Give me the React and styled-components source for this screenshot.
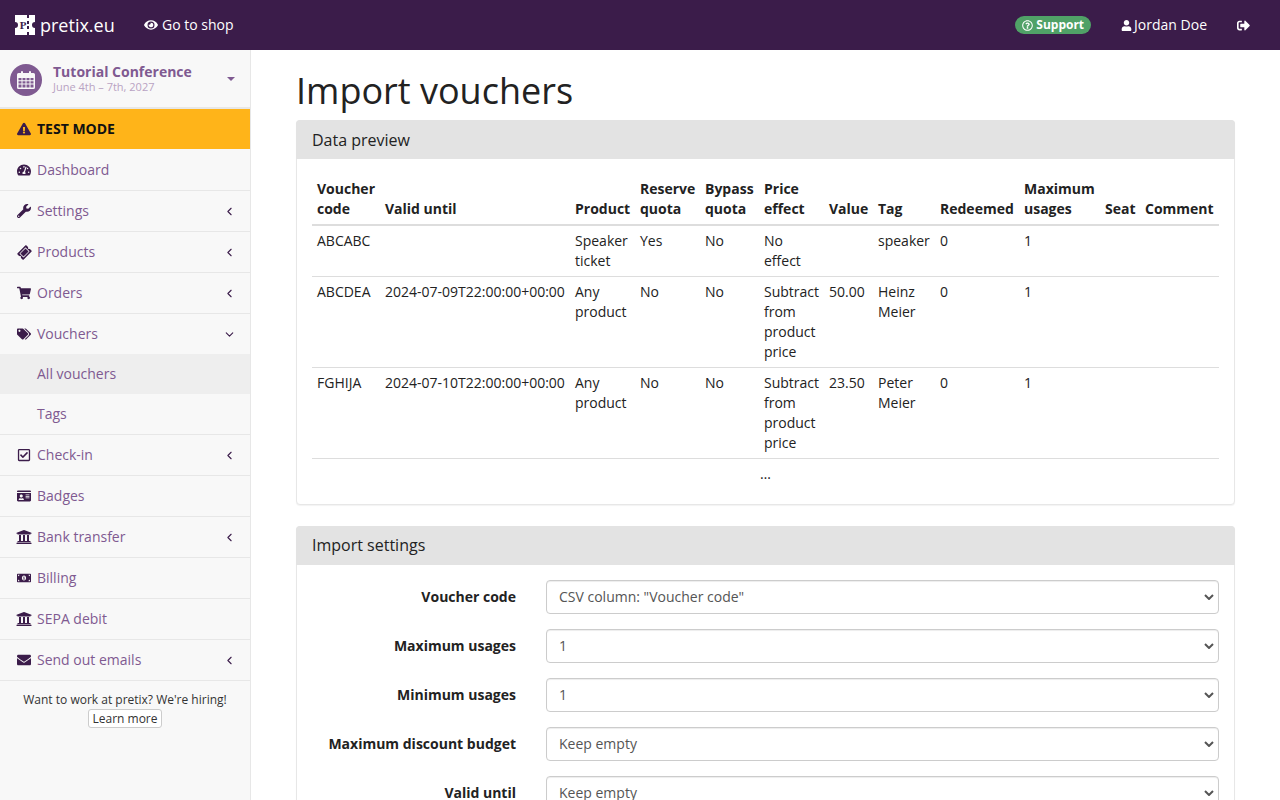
import React from "react";
import styled, { createGlobalStyle } from "styled-components";
import {
  FaEye, FaTachometerAlt, FaWrench, FaTicketAlt, FaShoppingCart, FaTags, FaRegCheckSquare,
  FaIdCard, FaUniversity, FaMoneyBillAlt, FaEnvelope, FaSignOutAlt, FaUser, FaRegQuestionCircle,
  FaExclamationTriangle,
} from "react-icons/fa";
import { ChevronLeft, ChevronDown } from "lucide-react";

const selectArrow = `url("data:image/svg+xml,%3Csvg xmlns='http://www.w3.org/2000/svg' width='10' height='6' viewBox='0 0 10 6'%3E%3Cpath d='M1 1l4 4 4-4' fill='none' stroke='%23555' stroke-width='2'/%3E%3C/svg%3E")`;

const GlobalStyle = createGlobalStyle`
  * { box-sizing: border-box; }
  html, body { margin: 0; height: 100%; overflow: hidden; }
  body {
    font-family: "Open Sans", "Liberation Sans", sans-serif;
    font-size: 14px;
    line-height: 20px;
    color: #222;
    background: #fff;
  }
`;

const Page = styled.div`
  height: 100vh;
  display: flex;
  flex-direction: column;
  overflow: hidden;
`;

// top bar
const TopBar = styled.nav`
  flex: none;
  height: 50px;
  background: #3b1c4a;
  color: #fff;
  display: flex;
  align-items: center;
  padding: 0 30px 0 15px;
`;

const Brand = styled.a`
  display: flex;
  align-items: center;
  gap: 5px;
  font-size: 18px;
  width: 129px;
`;

const TopLink = styled.a`
  display: inline-flex;
  align-items: center;
  gap: ${(p) => p.$iconGap || 4}px;
  margin-left: ${(p) => p.$gap || 0}px;
  svg { font-size: 13px; }
`;

const Spacer = styled.div`
  flex: 1;
`;

const SupportBadge = styled.span`
  display: inline-flex;
  align-items: center;
  gap: 3px;
  height: 18px;
  padding: 0 7px;
  border-radius: 9px;
  background: #50a167;
  font-size: 12px;
  font-weight: 700;
  svg { font-size: 11px; }
`;

const Body = styled.div`
  flex: 1;
  min-height: 0;
  display: flex;
`;

// sidebar
const Sidebar = styled.aside`
  flex: none;
  width: 251px;
  background: #f8f8f8;
  border-right: 1px solid #e7e7e7;
`;

const EventPicker = styled.div`
  height: 59px;
  display: flex;
  align-items: center;
  padding: 3px 15px 0 10px;
  border-bottom: 2px solid #e7e7e7;
`;

const EventIcon = styled.span`
  flex: none;
  width: 32px;
  height: 32px;
  border-radius: 50%;
  background: #7f5a91;
  display: flex;
  align-items: center;
  justify-content: center;
`;

const EventText = styled.div`
  flex: 1;
  margin-left: 11px;
  padding-bottom: 2px;
`;

const EventName = styled.div`
  color: #7f5a91;
  font-weight: 700;
  line-height: 16px;
`;

const EventDate = styled.div`
  color: #b8a3c3;
  font-size: 11px;
  line-height: 14px;
`;

const Caret = styled.span`
  width: 0;
  height: 0;
  margin-bottom: 3px;
  border-top: 4px solid #7f5a91;
  border-left: 4px solid transparent;
  border-right: 4px solid transparent;
`;

const TestMode = styled.div`
  height: 41px;
  display: flex;
  align-items: center;
  gap: 6px;
  padding: 0 15px 0 17px;
  background: #ffb419;
  border-bottom: 1px solid #f8f8f8;
  color: #111;
  font-weight: 700;
  svg { color: #3b1c4a; font-size: 14px; }
`;

const NavItem = styled.a`
  height: ${(p) => (p.$open ? 40 : 41)}px;
  display: flex;
  align-items: center;
  padding: 0 14px 0 15px;
  color: #7f5a91;
  border-bottom: ${(p) => (p.$open ? "none" : "1px solid #e7e7e7")};
`;

const NavIcon = styled.span`
  flex: none;
  width: 18px;
  margin-right: 4px;
  display: flex;
  justify-content: center;
  color: #3b1c4a;
  font-size: ${(p) => p.$size || 14}px;
`;

const DiagonalTicket = styled(FaTicketAlt)`
  transform: rotate(-45deg);
`;

const NavLabel = styled.span`
  flex: 1;
`;

const NavArrow = styled.span`
  display: flex;
  color: #3b1c4a;
`;

const SubItem = styled.a`
  height: ${(p) => (p.$last ? 41 : 40)}px;
  display: flex;
  align-items: center;
  padding: 0 0 ${(p) => (p.$last ? 1 : 0)}px 37px;
  color: #7f5a91;
  background: ${(p) => (p.$active ? "#eee" : "transparent")};
  border-bottom: ${(p) => (p.$last ? "1px solid #e7e7e7" : "none")};
`;

const Hiring = styled.div`
  padding: 9px 10px;
  text-align: center;
  font-size: 12px;
  line-height: 20px;
  color: #333;
`;

const SmallButton = styled.a`
  display: inline-block;
  vertical-align: top;
  margin-top: -1px;
  padding: 0 3px;
  line-height: 17px;
  border: 1px solid #ccc;
  border-radius: 3px;
  background: #fff;
`;

// main content
const Main = styled.main`
  flex: 1;
  min-width: 0;
  padding: 0 45px;
  overflow: hidden;
`;

const Title = styled.h1`
  margin: 21px 0 9px;
  font-size: 36px;
  font-weight: 400;
  line-height: 40px;
  color: #222;
`;

const Panel = styled.section`
  margin-bottom: 21px;
  border: 1px solid #e7e7e7;
  border-radius: 4px;
  box-shadow: 0 1px 1px rgba(0, 0, 0, 0.05);
  background: #fff;
`;

const PanelHeading = styled.div`
  margin: -1px -1px 0;
  padding: ${(p) => p.$top || 10}px 16px 0;
  height: 39px;
  background: #e3e3e3;
  border-radius: 4px 4px 0 0;
  font-size: 16px;
  line-height: 19px;
  color: #222;
`;

const PanelBody = styled.div`
  padding: 15px;
`;

const Table = styled.table`
  width: 100%;
  table-layout: fixed;
  border-collapse: collapse;
  border-spacing: 0;
  th, td {
    padding: 5px;
    line-height: 20px;
    text-align: left;
  }
  th {
    vertical-align: bottom;
    border-bottom: 2px solid #ddd;
  }
  td {
    vertical-align: top;
    border-top: 1px solid #ddd;
  }
  td:nth-child(2) {
    white-space: nowrap;
  }
  td.more {
    text-align: center;
  }
`;

const Col = styled.col`
  width: ${(p) => p.$w}px;
`;

const FormRow = styled.div`
  display: grid;
  grid-template-columns: 204px 1fr;
  column-gap: 30px;
  align-items: center;
  margin-bottom: 15px;
`;

const FormLabel = styled.label`
  font-weight: 700;
  text-align: right;
`;

const Select = styled.select`
  appearance: none;
  width: 100%;
  height: 34px;
  padding: 6px 24px 6px 12px;
  font: inherit;
  color: #555;
  background: #fff ${selectArrow} no-repeat right 4px center;
  border: 1px solid #ccc;
  border-radius: 4px;
  box-shadow: inset 0 1px 1px rgba(0, 0, 0, 0.075);
`;

const Logo = () => (
  <svg width="20" height="20" viewBox="0 0 20 20" aria-hidden="true">
    <path
      fill="#fff"
      d="M0 0h20v7a3 3 0 0 0 0 6v7H0v-7a3 3 0 0 0 0-6z"
    />
    <path fill="#3b1c4a" d="M12 0h2v3h-2zM12 6h2v3h-2zM12 11h2v3h-2zM12 17h2v3h-2z" />
    <text x="8" y="14" textAnchor="middle" fontSize="11" fontWeight="700" fontFamily="Liberation Serif, serif" fill="#3b1c4a">P</text>
  </svg>
);

// solid calendar with a grid of day cells, the icon package only has the outlined one
const CalendarIcon = () => (
  <svg width="18" height="18" viewBox="0 0 18 18" aria-hidden="true">
    <path
      fill="#f8f8f8"
      fillRule="evenodd"
      d="M1.5 2H4V1a1 1 0 0 1 2 0v1h6V1a1 1 0 0 1 2 0v1h2.500A1.500 1.500 0 0 1 18 3.500v13a1.500 1.500 0 0 1-1.500 1.500h-15A1.500 1.500 0 0 1 0 16.500v-13A1.500 1.500 0 0 1 1.500 2zM1.500 7v2.300h3V7zM5.500 7v2.300h3V7zM9.500 7v2.300h3V7zM13.500 7v2.300h3V7zM1.500 10.300v2.300h3v-2.300zM5.500 10.300v2.300h3v-2.300zM9.500 10.300v2.300h3v-2.300zM13.500 10.300v2.300h3v-2.300zM1.500 13.600v2.900h3v-2.900zM5.500 13.600v2.900h3v-2.900zM9.500 13.600v2.900h3v-2.900zM13.500 13.600v2.900h3v-2.900z"
    />
  </svg>
);

const navTop = [
  { icon: <FaTachometerAlt />, label: "Dashboard" },
  { icon: <FaWrench />, label: "Settings", arrow: true },
  { icon: <DiagonalTicket />, size: 13, label: "Products", arrow: true },
  { icon: <FaShoppingCart />, label: "Orders", arrow: true },
];

const navBottom = [
  { icon: <FaRegCheckSquare />, label: "Check-in", arrow: true },
  { icon: <FaIdCard />, label: "Badges" },
  { icon: <FaUniversity />, size: 16, label: "Bank transfer", arrow: true },
  { icon: <FaMoneyBillAlt />, label: "Billing" },
  { icon: <FaUniversity />, size: 16, label: "SEPA debit" },
  { icon: <FaEnvelope />, label: "Send out emails", arrow: true },
];

const columnWidths = [68, 190, 65, 65, 59, 65, 49, 62, 84, 81, 40, 79];

const columns = [
  "Voucher code", "Valid until", "Product", "Reserve quota", "Bypass quota", "Price effect",
  "Value", "Tag", "Redeemed", "Maximum usages", "Seat", "Comment",
];

const rows = [
  ["ABCABC", "", "Speaker ticket", "Yes", "No", "No effect", "", "speaker", "0", "1", "", ""],
  ["ABCDEA", "2024-07-09T22:00:00+00:00", "Any product", "No", "No", "Subtract from product price", "50.00", "Heinz Meier", "0", "1", "", ""],
  ["FGHIJA", "2024-07-10T22:00:00+00:00", "Any product", "No", "No", "Subtract from product price", "23.50", "Peter Meier", "0", "1", "", ""],
];

const formFields = [
  ["Voucher code", 'CSV column: "Voucher code"'],
  ["Maximum usages", "1"],
  ["Minimum usages", "1"],
  ["Maximum discount budget", "Keep empty"],
  ["Valid until", "Keep empty"],
];

const renderNav = (item) => (
  <NavItem key={item.label}>
    <NavIcon $size={item.size}>{item.icon}</NavIcon>
    <NavLabel>{item.label}</NavLabel>
    {item.arrow && <NavArrow><ChevronLeft size={13} strokeWidth={2} /></NavArrow>}
  </NavItem>
);

export default function App() {
  return (
    <Page>
      <GlobalStyle />
      <TopBar>
        <Brand><Logo />pretix.eu</Brand>
        <TopLink><FaEye size={14} />Go to shop</TopLink>
        <Spacer />
        <SupportBadge><FaRegQuestionCircle />Support</SupportBadge>
        <TopLink $gap={30} $iconGap={2}><FaUser size={11} />Jordan Doe</TopLink>
        <TopLink $gap={30}><FaSignOutAlt /></TopLink>
      </TopBar>
      <Body>
        <Sidebar>
          <EventPicker>
            <EventIcon><CalendarIcon /></EventIcon>
            <EventText>
              <EventName>Tutorial Conference</EventName>
              <EventDate>June 4th – 7th, 2027</EventDate>
            </EventText>
            <Caret />
          </EventPicker>
          <TestMode><FaExclamationTriangle />TEST MODE</TestMode>
          {navTop.map(renderNav)}
          <NavItem $open>
            <NavIcon $size={14}><FaTags /></NavIcon>
            <NavLabel>Vouchers</NavLabel>
            <NavArrow><ChevronDown size={13} strokeWidth={2} /></NavArrow>
          </NavItem>
          <SubItem $active>All vouchers</SubItem>
          <SubItem $last>Tags</SubItem>
          {navBottom.map(renderNav)}
          <Hiring>
            Want to work at pretix? We're hiring!
            <br />
            <SmallButton>Learn more</SmallButton>
          </Hiring>
        </Sidebar>
        <Main>
          <Title>Import vouchers</Title>
          <Panel>
            <PanelHeading $top={11}>Data preview</PanelHeading>
            <PanelBody>
              <Table>
                <colgroup>
                  {columnWidths.map((w, i) => <Col key={i} $w={w} />)}
                </colgroup>
                <thead>
                  <tr>{columns.map((c) => <th key={c}>{c}</th>)}</tr>
                </thead>
                <tbody>
                  {rows.map((r) => (
                    <tr key={r[0]}>{r.map((v, i) => <td key={i}>{v}</td>)}</tr>
                  ))}
                  <tr><td className="more" colSpan={12}>…</td></tr>
                </tbody>
              </Table>
            </PanelBody>
          </Panel>
          <Panel>
            <PanelHeading>Import settings</PanelHeading>
            <PanelBody>
              {formFields.map(([label, value]) => (
                <FormRow key={label}>
                  <FormLabel>{label}</FormLabel>
                  <Select defaultValue={value}><option>{value}</option></Select>
                </FormRow>
              ))}
            </PanelBody>
          </Panel>
        </Main>
      </Body>
    </Page>
  );
}
